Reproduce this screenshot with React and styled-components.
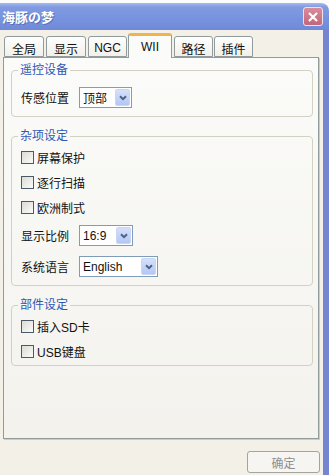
import React from "react";
import styled, { createGlobalStyle } from "styled-components";

const FONT = `"Liberation Sans", "Noto Sans CJK SC", sans-serif`;

const GlobalStyle = createGlobalStyle`
  body {
    margin: 0;
    background: #fbfbfb;
  }
  * {
    box-sizing: border-box;
  }
`;

const Window = styled.div`
  width: 329px;
  height: 475px;
  display: flex;
  flex-direction: column;
  background: #fbfbfb;
  font-family: ${FONT};
  font-size: 12px;
  color: #111;
  overflow: hidden;
`;

const TopStrip = styled.div`
  height: 3px;
`;

const TitleBar = styled.div`
  height: 27px;
  display: flex;
  align-items: center;
  justify-content: space-between;
  padding: 0 6px 0 2px;
  border-top-right-radius: 8px;
  background: linear-gradient(#a7baee 0, #819ae1 4px, #7792dd 60%, #6f89d7 100%);
`;

const Title = styled.span`
  color: #fff;
  font-weight: bold;
  font-size: 13px;
  text-shadow: 1px 1px 0 #5b70b9;
`;

const CloseButton = styled.div`
  width: 20px;
  height: 19px;
  border: 1px solid #eee2ea;
  border-radius: 3px;
  background: linear-gradient(#d88c9b, #c3667a);
  display: flex;
  align-items: center;
  justify-content: center;
`;

const Body = styled.div`
  flex: 1;
  display: flex;
  flex-direction: column;
  background: #f2f0e7;
  border-right: 6px solid #7486d3;
  padding: 3px 0 0 3px;
`;

const TabRow = styled.div`
  height: 24px;
  display: flex;
  align-items: flex-end;
  padding-left: 1px;
`;

const Tab = styled.div`
  position: relative;
  width: ${({ $w }) => $w}px;
  margin-right: ${({ $gap }) => $gap}px;
  height: ${({ $active }) => ($active ? 25 : 21)}px;
  margin-bottom: ${({ $active }) => ($active ? -1 : 0)}px;
  z-index: ${({ $active }) => ($active ? 1 : 0)};
  border: 1px solid #919b9c;
  border-bottom: ${({ $active }) => ($active ? "none" : "1px solid #919b9c")};
  border-top: ${({ $active }) =>
    $active ? "3px solid #f0b44c" : "1px solid #919b9c"};
  border-radius: 3px 3px 0 0;
  background: ${({ $active }) =>
    $active ? "#fbfbf9" : "linear-gradient(#fefefe, #f1f0ea)"};
  display: flex;
  justify-content: center;
  align-items: center;
  padding-top: ${({ $active }) => ($active ? 0 : 3)}px;
  font-size: 12px;
`;

const Panel = styled.div`
  width: 316px;
  height: 382px;
  border: 1px solid #919b9c;
  background: linear-gradient(#fbfbf9, #f3f2ed);
  box-shadow: 1px 1px 0 #cfccbe;
  padding: 0 5px 0 7px;
  display: flex;
  flex-direction: column;
`;

const Group = styled.fieldset`
  margin: ${({ $mt }) => $mt}px 0 0;
  padding: ${({ $pt }) => $pt}px 0 ${({ $pb }) => $pb}px 9px;
  border: 1px solid #d3d1c2;
  border-radius: 4px;
  min-width: 0;
`;

const Legend = styled.legend`
  color: #2f57b5;
  padding: 0 2px;
  margin-left: -3px;
  line-height: 14px;
  font-size: 12px;
`;

const CheckRow = styled.div`
  height: 25px;
  display: flex;
  align-items: center;
  gap: 3px;
`;

const Box = styled.span`
  width: 13px;
  height: 13px;
  border: 1px solid #4c5968;
  background: linear-gradient(135deg, #dcdcd5, #fafaf8);
`;

const FieldRow = styled.div`
  height: 31px;
  display: flex;
  align-items: center;
`;

const FieldLabel = styled.span`
  width: 58px;
`;

const Select = styled.div`
  width: ${({ $w }) => $w}px;
  height: 21px;
  border: 1px solid #7f9db9;
  background: #fff;
  display: flex;
  align-items: center;
  justify-content: space-between;
  padding: 0 1px 0 3px;
`;

const Arrow = styled.span`
  width: 15px;
  height: 17px;
  border-radius: 2px;
  border: 1px solid #c9d6f4;
  background: linear-gradient(#d5e0fb, #b4c7f4);
  display: flex;
  align-items: center;
  justify-content: center;
`;

const Footer = styled.div`
  flex: 1;
  display: flex;
  justify-content: flex-end;
  align-items: flex-start;
  padding: 12px 3px 0 0;
`;

const Button = styled.div`
  width: 73px;
  height: 22px;
  border: 1px solid #a3a3a0;
  border-radius: 3px;
  background: #f6f5f1;
  color: #8e8e8e;
  display: flex;
  align-items: center;
  justify-content: center;
`;

const tabs = [
  { label: "全局", w: 40, gap: 2 },
  { label: "显示", w: 40, gap: 2 },
  { label: "NGC", w: 39, gap: 1 },
  { label: "WII", w: 44, gap: 2, active: true },
  { label: "路径", w: 39, gap: 1 },
  { label: "插件", w: 39, gap: 0 },
];

const Chevron = () => (
  <svg width="8" height="6" viewBox="0 0 8 6">
    <path d="M1 1.2 L4 4.2 L7 1.2" fill="none" stroke="#4d6185" strokeWidth="2" />
  </svg>
);

const Check = ({ children }) => (
  <CheckRow>
    <Box />
    <span>{children}</span>
  </CheckRow>
);

const Field = ({ label, value, w }) => (
  <FieldRow>
    <FieldLabel>{label}</FieldLabel>
    <Select $w={w}>
      <span>{value}</span>
      <Arrow>
        <Chevron />
      </Arrow>
    </Select>
  </FieldRow>
);

export default function App() {
  return (
    <>
      <GlobalStyle />
      <Window>
        <TopStrip />
        <TitleBar>
          <Title>海豚の梦</Title>
          <CloseButton>
            <svg width="12" height="12" viewBox="0 0 12 12">
              <path d="M2 2 L10 10 M10 2 L2 10" stroke="#fff" strokeWidth="2.2" />
            </svg>
          </CloseButton>
        </TitleBar>
        <Body>
          <TabRow>
            {tabs.map((t) => (
              <Tab key={t.label} $w={t.w} $gap={t.gap} $active={t.active}>
                {t.label}
              </Tab>
            ))}
          </TabRow>
          <Panel>
            <Group $mt={5} $pt={5} $pb={3}>
              <Legend>遥控设备</Legend>
              <Field label="传感位置" value="顶部" w={53} />
            </Group>
            <Group $mt={12} $pt={2} $pb={3}>
              <Legend>杂项设定</Legend>
              <Check>屏幕保护</Check>
              <Check>逐行扫描</Check>
              <Check>欧洲制式</Check>
              <Field label="显示比例" value="16:9" w={54} />
              <Field label="系统语言" value="English" w={79} />
            </Group>
            <Group $mt={12} $pt={2} $pb={1}>
              <Legend>部件设定</Legend>
              <Check>插入SD卡</Check>
              <Check>USB键盘</Check>
            </Group>
          </Panel>
          <Footer>
            <Button>确定</Button>
          </Footer>
        </Body>
      </Window>
    </>
  );
}
